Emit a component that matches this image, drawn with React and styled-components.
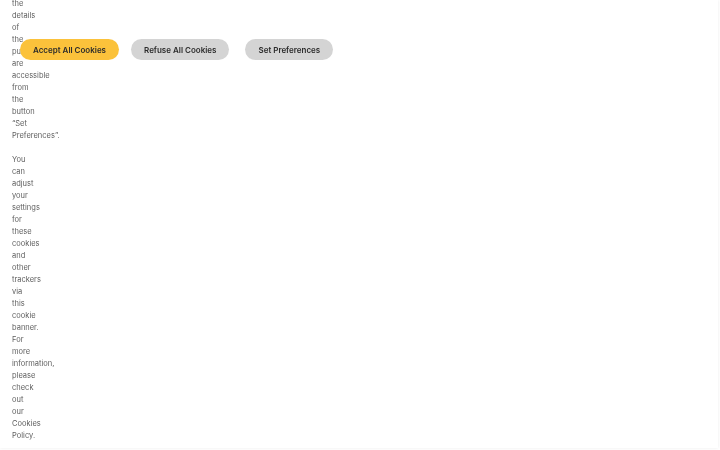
import React from "react";
import styled, { createGlobalStyle } from "styled-components";

const GlobalStyle = createGlobalStyle`
  html, body {
    margin: 0;
    padding: 0;
    background: #ffffff;
  }
  body {
    font-family: Inter, "Open Sans", "Liberation Sans", sans-serif;
    overflow: hidden;
  }
`;

const Banner = styled.div`
  position: fixed;
  top: 0;
  left: 0;
  right: 2px;
  bottom: 2px;
  display: flex;
  flex-direction: column;
  justify-content: flex-end;
  background: #fff;
  box-shadow: 0 0 3px rgba(0, 0, 0, 0.08);
`;

const Body = styled.div`
  padding: 0 12px 6px;
`;

const Text = styled.p`
  width: 0;
  margin: 0 0 12px;
  font-size: 7.5px;
  line-height: 12px;
  color: #5e5e5e;
  &:last-child {
    margin-bottom: 0;
  }
`;

const Actions = styled.div`
  position: absolute;
  top: 39px;
  left: 20px;
  display: flex;
  gap: 12px;
`;

const Button = styled.button`
  height: 21px;
  padding: 0 13px;
  margin-left: ${(p) => (p.$push ? 4 : 0)}px;
  border: none;
  border-radius: 11px;
  background: ${(p) => (p.$primary ? "#fbc23b" : "#d4d4d4")};
  color: #2b2b2b;
  font-family: inherit;
  font-size: 8px;
  font-weight: 600;
  cursor: pointer;
`;

export default function App() {
  return (
    <>
      <GlobalStyle />
      <Banner>
        <Body>
          <Text>
            We use cookies and other trackers to improve your experience on our
            website, to analyse our traffic and to show you personalised
            content. Some of them are necessary for the website to work, others
            are only set with your consent. A list of the trackers used and the
            details of the purposes are accessible from the button “Set
            Preferences”.
          </Text>
          <Text>
            You can adjust your settings for these cookies and other trackers
            via this cookie banner. For more information, please check out our
            Cookies Policy.
          </Text>
        </Body>
        <Actions>
          <Button $primary>Accept All Cookies</Button>
          <Button>Refuse All Cookies</Button>
          <Button $push>Set Preferences</Button>
        </Actions>
      </Banner>
    </>
  );
}
